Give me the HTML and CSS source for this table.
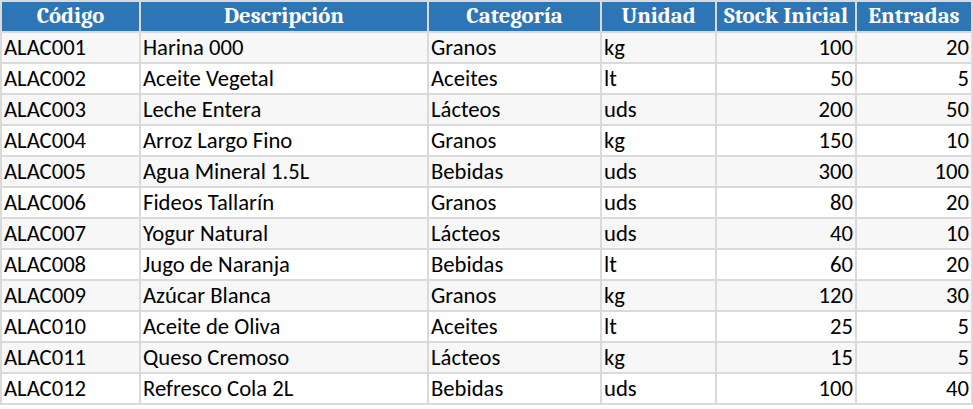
FILE: index.html
```html
<!DOCTYPE html>
<html lang="es">
<head>
<meta charset="utf-8">
<title>Inventario</title>
<link rel="stylesheet" href="styles.css">
</head>
<body>
<table class="grid">
  <colgroup>
    <col class="c1"><col class="c2"><col class="c3"><col class="c4"><col class="c5"><col class="c6">
  </colgroup>
  <thead>
    <tr><th>Código</th><th>Descripción</th><th>Categoría</th><th>Unidad</th><th>Stock Inicial</th><th>Entradas</th></tr>
  </thead>
  <tbody>
    <tr><td>ALAC001</td><td>Harina 000</td><td>Granos</td><td>kg</td><td class="num">100</td><td class="num">20</td></tr>
    <tr><td>ALAC002</td><td>Aceite Vegetal</td><td>Aceites</td><td>lt</td><td class="num">50</td><td class="num">5</td></tr>
    <tr><td>ALAC003</td><td>Leche Entera</td><td>Lácteos</td><td>uds</td><td class="num">200</td><td class="num">50</td></tr>
    <tr><td>ALAC004</td><td>Arroz Largo Fino</td><td>Granos</td><td>kg</td><td class="num">150</td><td class="num">10</td></tr>
    <tr><td>ALAC005</td><td>Agua Mineral 1.5L</td><td>Bebidas</td><td>uds</td><td class="num">300</td><td class="num">100</td></tr>
    <tr><td>ALAC006</td><td>Fideos Tallarín</td><td>Granos</td><td>uds</td><td class="num">80</td><td class="num">20</td></tr>
    <tr><td>ALAC007</td><td>Yogur Natural</td><td>Lácteos</td><td>uds</td><td class="num">40</td><td class="num">10</td></tr>
    <tr><td>ALAC008</td><td>Jugo de Naranja</td><td>Bebidas</td><td>lt</td><td class="num">60</td><td class="num">20</td></tr>
    <tr><td>ALAC009</td><td>Azúcar Blanca</td><td>Granos</td><td>kg</td><td class="num">120</td><td class="num">30</td></tr>
    <tr><td>ALAC010</td><td>Aceite de Oliva</td><td>Aceites</td><td>lt</td><td class="num">25</td><td class="num">5</td></tr>
    <tr><td>ALAC011</td><td>Queso Cremoso</td><td>Lácteos</td><td>kg</td><td class="num">15</td><td class="num">5</td></tr>
    <tr><td>ALAC012</td><td>Refresco Cola 2L</td><td>Bebidas</td><td>uds</td><td class="num">100</td><td class="num">40</td></tr>
  </tbody>
</table>
</body>
</html>
```

FILE: styles.css
```css
html, body {
  margin: 0;
  padding: 0;
  background: #ffffff;
}

.grid {
  border-collapse: separate;
  border-spacing: 0;
  table-layout: fixed;
  width: 973px;
  border-top: 2px solid #dadada;
  border-left: 2px solid #dadada;
  font-family: Carlito, Lato, "Liberation Sans", sans-serif;
  font-size: 22.67px;
  color: #000;
}

.c1 { width: 139px; }
.c2 { width: 288px; }
.c3 { width: 173px; }
.c4 { width: 115px; }
.c5 { width: 140px; }
.c6 { width: 116px; }

.grid th,
.grid td {
  border-right: 2px solid #dadada;
  border-bottom: 2px solid #dadada;
  height: 31px;
  padding: 0 2px 0 2px;
  box-sizing: border-box;
  white-space: nowrap;
  overflow: hidden;
  text-align: left;
  line-height: 29px;
}

.grid thead th {
  background: #2e75b6;
  color: #ffffff;
  font-family: Caladea, "DejaVu Serif", "Liberation Serif", serif;
  font-weight: bold;
  font-size: 22.67px;
  text-align: center;
}

.grid tbody tr:nth-child(odd) td {
  background: #f7f7f7;
}

.grid tbody tr:nth-child(even) td {
  background: #ffffff;
}

.grid td.num {
  text-align: right;
}
```
